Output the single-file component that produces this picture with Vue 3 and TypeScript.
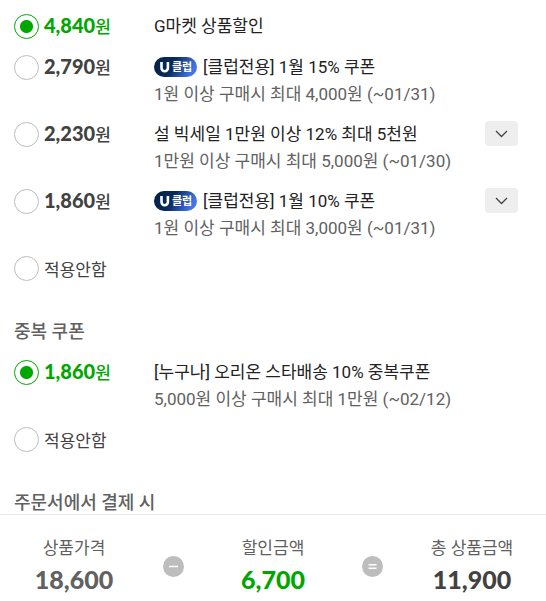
<script setup lang="ts">
import { ref } from 'vue'

interface Coupon {
  id: string
  price?: string
  title?: string
  condition?: string
  club?: boolean
  expandable?: boolean
}

interface CouponGroup {
  name: string
  heading?: string
  coupons: Coupon[]
}

const groups: CouponGroup[] = [
  {
    name: 'basic',
    coupons: [
      { id: 'gmarket', price: '4,840', title: 'G마켓 상품할인' },
      { id: 'club15', price: '2,790', title: '[클럽전용] 1월 15% 쿠폰', condition: '1원 이상 구매시 최대 4,000원 (~01/31)', club: true },
      { id: 'bigsale', price: '2,230', title: '설 빅세일 1만원 이상 12% 최대 5천원', condition: '1만원 이상 구매시 최대 5,000원 (~01/30)', expandable: true },
      { id: 'club10', price: '1,860', title: '[클럽전용] 1월 10% 쿠폰', condition: '1원 이상 구매시 최대 3,000원 (~01/31)', club: true, expandable: true },
      { id: 'none' },
    ],
  },
  {
    name: 'extra',
    heading: '중복 쿠폰',
    coupons: [
      { id: 'orion', price: '1,860', title: '[누구나] 오리온 스타배송 10% 중복쿠폰', condition: '5,000원 이상 구매시 최대 1만원 (~02/12)' },
      { id: 'none' },
    ],
  },
]

const selected = ref<Record<string, string>>({ basic: 'gmarket', extra: 'orion' })
</script>

<template>
  <main class="sheet">
    <form class="options">
      <section v-for="group in groups" :key="group.name" class="group">
        <h2 v-if="group.heading" class="heading">{{ group.heading }}</h2>
        <ul class="list">
          <li v-for="c in group.coupons" :key="c.id" class="row">
            <label class="choice">
              <input v-model="selected[group.name]" class="radio" type="radio" :name="group.name" :value="c.id" />
              <span v-if="c.price" class="price"><strong class="digits">{{ c.price }}</strong>원</span>
              <span v-else class="none">적용안함</span>
            </label>
            <div v-if="c.title" class="detail">
              <p class="title">
                <svg v-if="c.club" class="club" width="43" height="20" viewBox="0 0 43 20" role="img" aria-label="U클럽">
                  <defs>
                    <linearGradient :id="`grad-${c.id}`" x1="0" y1="0" x2="1" y2="0.25">
                      <stop offset="0" stop-color="#02203f" />
                      <stop offset="0.5" stop-color="#0a2a5c" />
                      <stop offset="1" stop-color="#4275e8" />
                    </linearGradient>
                  </defs>
                  <rect width="43" height="20" rx="10" :fill="`url(#grad-${c.id})`" />
                  <path d="M7.500 5v6a3.200 3.200 0 0 0 6.400 0V5" fill="none" stroke="#fff" stroke-width="2.600" />
                  <text x="18" y="14" class="club-text">클럽</text>
                </svg>
                <span>{{ c.title }}</span>
              </p>
              <p v-if="c.condition" class="condition">{{ c.condition }}</p>
            </div>
            <button v-if="c.expandable" class="expand" type="button" aria-label="펼치기">
              <svg width="13" height="8" viewBox="0 0 13 8" aria-hidden="true">
                <path d="M1 1l5.500 5.500L12 1" fill="none" stroke="#444" stroke-width="1.300" />
              </svg>
            </button>
          </li>
        </ul>
      </section>
      <h2 class="heading last">주문서에서 결제 시</h2>
    </form>

    <dl class="summary">
      <div class="amount">
        <dt>상품가격</dt>
        <dd>18,600</dd>
      </div>
      <svg class="operator" width="21" height="21" viewBox="0 0 21 21" aria-hidden="true">
        <circle cx="10.5" cy="10.5" r="10.5" fill="#bdbdbd" />
        <path d="M6 10.500h9" stroke="#fff" stroke-width="1.500" />
      </svg>
      <div class="amount discount">
        <dt>할인금액</dt>
        <dd>6,700</dd>
      </div>
      <svg class="operator" width="21" height="21" viewBox="0 0 21 21" aria-hidden="true">
        <circle cx="10.5" cy="10.5" r="10.5" fill="#bdbdbd" />
        <path d="M6.500 8.700h8M6.500 12.300h8" stroke="#fff" stroke-width="1.400" />
      </svg>
      <div class="amount total">
        <dt>총 상품금액</dt>
        <dd>11,900</dd>
      </div>
    </dl>
  </main>
</template>

<style>
body {
  background: #fff;
}
</style>

<style scoped>
.sheet {
  font-family: Roboto, "Noto Sans CJK KR", sans-serif;
  font-size: 17px;
  color: #222;
}
.options {
  padding: 12px 14px 0;
}
.list {
  list-style: none;
  margin: 0;
  padding: 0;
  display: flex;
  flex-direction: column;
  gap: 13px;
}
.group {
  padding-bottom: 39px;
}
.row {
  display: grid;
  grid-template-columns: 140px 1fr auto;
  align-items: start;
}
.choice {
  display: flex;
  align-items: center;
  gap: 5px;
  height: 28px;
  cursor: pointer;
}
.radio {
  appearance: none;
  flex: none;
  width: 25px;
  height: 25px;
  margin: 0;
  border: 1px solid #bdbdbd;
  border-radius: 50%;
  background: #fff;
}
.radio:checked {
  border-color: #00a700;
  background: radial-gradient(circle, #00a700 6px, #fff 7px);
}
.price {
  color: #424242;
  font-weight: 500;
  line-height: 28px;
}
.digits {
  font-family: Lato, sans-serif;
  font-size: 20px;
  font-weight: 900;
}
.radio:checked + .price {
  color: #00a700;
}
.none {
  color: #424242;
}
.title,
.condition {
  margin: 0;
  white-space: nowrap;
}
.title {
  display: flex;
  align-items: center;
  gap: 6px;
  line-height: 28px;
}
.condition {
  line-height: 26px;
  color: #616161;
}
.club-text {
  font-family: "Noto Sans CJK KR", sans-serif;
  font-size: 11px;
  font-weight: 700;
  fill: #fff;
}
.expand {
  display: flex;
  align-items: center;
  justify-content: center;
  width: 33px;
  height: 25px;
  margin: 1px 14px 0 0;
  padding: 0;
  border: 0;
  border-radius: 4px;
  background: #eee;
}
.heading {
  margin: 0;
  padding-bottom: 15px;
  font-size: 18px;
  font-weight: 500;
  line-height: 22px;
  color: #616161;
}
.last {
  padding: 0;
}
.summary {
  display: grid;
  grid-template-columns: 1fr auto 1fr auto 1fr;
  align-items: center;
  margin: 0;
  padding: 20px 0 8px;
  border-top: 1px solid #e8e8e8;
}
.operator {
  margin: 0 15px;
}
.amount {
  text-align: center;
  color: #616161;
}
.amount dt {
  line-height: 26px;
}
.amount dd {
  margin: 0;
  font-family: Lato, sans-serif;
  font-size: 25px;
  font-weight: 900;
  line-height: 36px;
}
.discount dd {
  color: #00a700;
}
.total dd {
  color: #424242;
}
</style>
